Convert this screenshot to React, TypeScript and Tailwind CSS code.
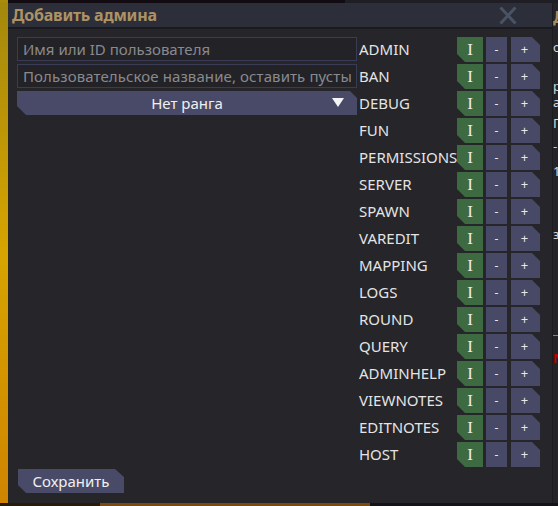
import React from "react";

const perms = [
  "ADMIN",
  "BAN",
  "DEBUG",
  "FUN",
  "PERMISSIONS",
  "SERVER",
  "SPAWN",
  "VAREDIT",
  "MAPPING",
  "LOGS",
  "ROUND",
  "QUERY",
  "ADMINHELP",
  "VIEWNOTES",
  "EDITNOTES",
  "HOST",
];

const font = { fontFamily: '"Noto Sans", sans-serif' };

function PermRow({ name }: { name: string }) {
  return (
    <div className="flex h-[25px] items-center">
      <div className="w-[98px] text-[15px] leading-none text-[#e4e4e4] whitespace-nowrap">{name}</div>
      <div className="flex h-[25px] w-[26px] items-center justify-center bg-[#3e6a41] text-[17px] text-[#ececec] [font-family:'Liberation_Serif',serif] [clip-path:polygon(0_0,100%_0,100%_100%,8px_100%,0_17px)]">
        I
      </div>
      <div className="ml-[3px] flex h-[25px] w-[21px] items-center justify-center bg-[#474967] text-[12px] text-[#e8e8e8]">
        -
      </div>
      <div className="ml-[4px] flex h-[25px] w-[29px] items-center justify-center bg-[#474967] text-[13px] text-[#e8e8e8] [clip-path:polygon(0_0,21px_0,100%_8px,100%_100%,0_100%)]">
        <span className="-ml-[2px]">+</span>
      </div>
    </div>
  );
}

export default function App() {
  return (
    <div className="flex h-[506px] w-[558px] flex-col overflow-hidden bg-[#1a1a1f]" style={font}>
      <div className="flex h-[3px] shrink-0">
        <div className="w-[8px] bg-[#a88a0c]" />
        <div className="w-[337px] bg-[#120c12]" />
        <div className="flex-1 bg-[#1e1e24]" />
      </div>
      <div className="flex h-[500px] shrink-0">
        <div className="w-[8px] shrink-0 bg-gradient-to-b from-[#a4880c] via-[#d6a400] to-[#d08400]" />
        {/* Window */}
        <div className="flex w-[544px] shrink-0 flex-col bg-[#25252a]">
          <div className="flex h-[24px] items-center justify-between bg-[#2c2e39] pl-[4px] pr-[35px]">
            <span className="text-[16px] font-bold leading-none tracking-[-0.2px] text-[#ad9264]">Добавить админа</span>
            <svg width="18" height="19" viewBox="0 0 18 19" className="mt-[1px]">
              <path d="M1.5 1.5 L16.5 17.5 M16.5 1.5 L1.5 17.5" stroke="#4a5363" strokeWidth="3" />
            </svg>
          </div>
          <div className="h-[2px] bg-[#1b1b1f]" />
          <div className="flex flex-1 flex-col pl-[9px] pt-[8px] pb-[10px]">
            <div className="flex gap-[2px]">
              <div className="flex w-[340px] flex-col gap-[3px]">
                <div className="flex h-[24px] items-center border border-[#3a3c55] bg-[#222227] px-[5px] text-[15px] text-[#8a8a8e] whitespace-nowrap overflow-hidden">
                  Имя или ID пользователя
                </div>
                <div className="flex h-[24px] items-center border border-[#3a3c55] bg-[#222227] px-[5px] text-[15px] tracking-[0.1px] text-[#8a8a8e] whitespace-nowrap overflow-hidden">
                  Пользовательское название, оставить пусты
                </div>
                <div className="relative flex h-[24px] items-center justify-center bg-[#484a68] text-[15px] text-[#f0f0f0] [clip-path:polygon(0_0,333px_0,100%_7px,100%_100%,9px_100%,0_15px)]">
                  Нет ранга
                  <svg width="12" height="9" viewBox="0 0 12 9" className="absolute right-[13px] top-[7px]">
                    <path d="M0 0 L12 0 L6 9 Z" fill="#f4f4f4" />
                  </svg>
                </div>
              </div>
              <div className="flex flex-col gap-[2px]">
                {perms.map((p) => (
                  <PermRow key={p} name={p} />
                ))}
              </div>
            </div>
            <div className="flex-1" />
            <div className="ml-[1px] flex h-[24px] w-[106px] items-center justify-center bg-[#484a68] text-[15px] text-[#f0f0f0] [clip-path:polygon(0_0,97px_0,100%_8px,100%_100%,8px_100%,0_16px)]">
              Сохранить
            </div>
          </div>
        </div>
        {/* partially visible background window */}
        <div className="flex min-w-0 flex-1 flex-col overflow-hidden border-l border-[#1c1c20] bg-[#232328] text-[13px] leading-[13px] text-[#d8d8d8]">
          <div className="h-[24px] pt-[8px] text-[16px] font-bold text-[#a88c60]">Д</div>
          <div className="mt-[14px]">о</div>
          <div className="mt-[26px]">р</div>
          <div className="mt-[3px]">а</div>
          <div className="mt-[8px]">П</div>
          <div className="mt-[10px] text-[#e8e000]">-</div>
          <div className="mt-[12px]">1</div>
          <div className="mt-[50px]">з</div>
          <div className="mt-[94px] h-[1px] bg-[#a07c50]" />
          <div className="mt-[16px] font-bold text-[#c00000]">N</div>
        </div>
      </div>
      <div className="flex h-[3px] shrink-0">
        <div className="w-[100px] bg-[#2a1a0a]" />
        <div className="w-[270px] bg-[#7a4a10]" />
        <div className="flex-1 bg-[#141418]" />
      </div>
    </div>
  );
}
